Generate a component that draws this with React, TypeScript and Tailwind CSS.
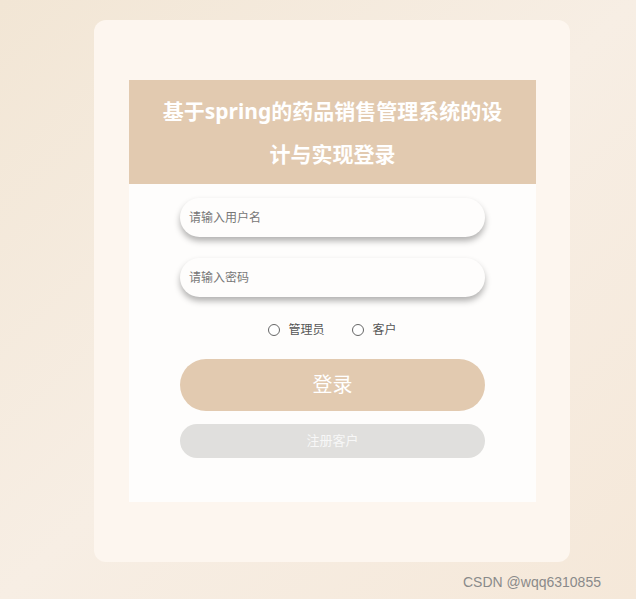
import React from "react";

export default function App() {
  return (
    <div
      className="relative w-[636px] h-[599px] overflow-hidden bg-gradient-to-br from-[#f2e6d5] via-[#f7eee4] to-[#f5e8d9]"
      style={{ fontFamily: '"Noto Sans", "Noto Sans CJK SC", sans-serif' }}
    >
      <div className="pt-[20px] pl-[94px]">
        <div className="w-[476px] h-[542px] rounded-[12px] bg-[#fdf6ef] pt-[60px] pl-[35px]">
          <div className="w-[407px] h-[422px] bg-[#fefdfc] flex flex-col">
            <div className="h-[104px] bg-[#e2cab0] flex items-center justify-center pt-[2px]">
              <h1 className="text-white font-bold text-[21px] leading-[43px] text-center whitespace-nowrap">
                基于spring的药品销售管理系统的设
                <br />
                计与实现登录
              </h1>
            </div>
            <div className="flex flex-col items-center pt-[14px]">
              <div className="w-[305px] h-[39px] rounded-full bg-[#fefdfc] shadow-[0_4px_6px_rgba(0,0,0,0.3)] flex items-center pl-[9px] text-[12px] text-[#777]">
                请输入用户名
              </div>
              <div className="mt-[21px] w-[305px] h-[39px] rounded-full bg-[#fefdfc] shadow-[0_4px_6px_rgba(0,0,0,0.3)] flex items-center pl-[9px] text-[12px] text-[#777]">
                请输入密码
              </div>
              <div className="mt-[25px] flex items-center text-[12px] text-[#555] h-[16px]">
                <span className="w-[12px] h-[12px] rounded-full border border-[#666] bg-white" />
                <span className="ml-[8px]">管理员</span>
                <span className="ml-[27px] w-[12px] h-[12px] rounded-full border border-[#666] bg-white" />
                <span className="ml-[9px]">客户</span>
              </div>
              <div className="mt-[21px] w-[305px] h-[52px] rounded-full bg-[#e2cab0] flex items-center justify-center text-white text-[20px]">
                登录
              </div>
              <div className="mt-[13px] w-[305px] h-[34px] rounded-full bg-[#e0dfdd] flex items-center justify-center text-[#f7f7f7] text-[13px]">
                注册客户
              </div>
            </div>
          </div>
        </div>
      </div>
      <div
        className="absolute left-[463px] top-[572px] text-[14px] text-[#8a8a8a]"
        style={{ fontFamily: '"Liberation Sans", Arial, sans-serif' }}
      >
        CSDN @wqq6310855
      </div>
    </div>
  );
}
